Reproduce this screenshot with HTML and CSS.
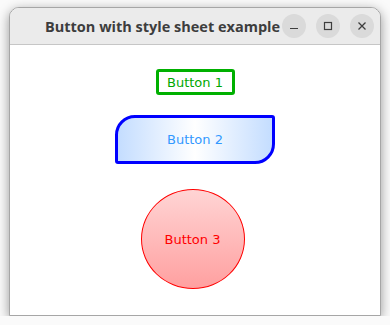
FILE: index.html
```html
<!DOCTYPE html>
<html lang="en">
<head>
<meta charset="UTF-8">
<title>Button with style sheet example</title>
<link rel="stylesheet" href="styles.css">
</head>
<body>

<div class="window">
    <div class="titlebar">
        <span class="title">Button with style sheet example</span>
        <div class="controls">
            <span class="ctl">
                <svg width="10" height="10" viewBox="0 0 10 10"><line x1="1" y1="7.5" x2="9" y2="7.5" stroke="#3d3d3d" stroke-width="1.2"/></svg>
            </span>
            <span class="ctl">
                <svg width="10" height="10" viewBox="0 0 10 10"><rect x="1.5" y="1.5" width="7" height="7" fill="none" stroke="#3d3d3d" stroke-width="1.2"/></svg>
            </span>
            <span class="ctl">
                <svg width="10" height="10" viewBox="0 0 10 10"><path d="M1.5 1.5 L8.5 8.5 M8.5 1.5 L1.5 8.5" stroke="#3d3d3d" stroke-width="1.3"/></svg>
            </span>
        </div>
    </div>
    <div class="content">
        <button class="btn1">Button 1</button>
        <button class="btn2">Button 2</button>
        <button class="btn3">Button 3</button>
    </div>
</div>

</body>
</html>
```

FILE: styles.css
```css
body {
    margin: 0;
    background-color: #fafafa;
    font-family: "DejaVu Sans", sans-serif;
}
.window {
    margin: 7px 0 0 9px;
    width: 372px;
    height: 309px;
    box-sizing: border-box;
    border: 1px solid #a6a6a6;
    border-radius: 10px 10px 0 0;
    background-color: #fff;
    box-shadow: 0 3px 12px rgba(0, 0, 0, 0.4);
    overflow: hidden;
}
.titlebar {
    display: flex;
    align-items: center;
    height: 36px;
    background-color: #ebebeb;
    border-bottom: 1px solid #c6c6c6;
}
.title {
    padding-left: 35px;
    font-family: "Open Sans", sans-serif;
    font-weight: bold;
    font-size: 14.5px;
    color: #3d3d3d;
}
.controls {
    display: flex;
    gap: 10px;
    margin-left: auto;
    padding-right: 6px;
}
.ctl {
    display: flex;
    align-items: center;
    justify-content: center;
    width: 24px;
    height: 24px;
    border-radius: 50%;
    background-color: #dadada;
}
.content {
    display: flex;
    flex-direction: column;
    align-items: center;
    padding-top: 24px;
}
button {
    font-family: "DejaVu Sans", sans-serif;
    font-size: 13px;
    box-sizing: border-box;
    padding: 0;
    cursor: pointer;
}
.btn1 {
    width: 79px;
    height: 26px;
    border: 3px solid #00b000;
    border-radius: 3px;
    background-color: #fff;
    color: #00a800;
}
.btn2 {
    margin-top: 20px;
    width: 160px;
    height: 49px;
    border: 3px solid #0000ff;
    border-radius: 20px 3px 20px 3px;
    background: linear-gradient(to right, #c4ddff, #ffffff 50%, #c4ddff);
    color: #3399ff;
}
.btn3 {
    margin-top: 25px;
    margin-right: 5px;
    width: 104px;
    height: 100px;
    border: 1px solid #ff0000;
    border-radius: 50%;
    background: linear-gradient(#ffd4d4, #ffa0a0);
    color: #ff0000;
}
```
